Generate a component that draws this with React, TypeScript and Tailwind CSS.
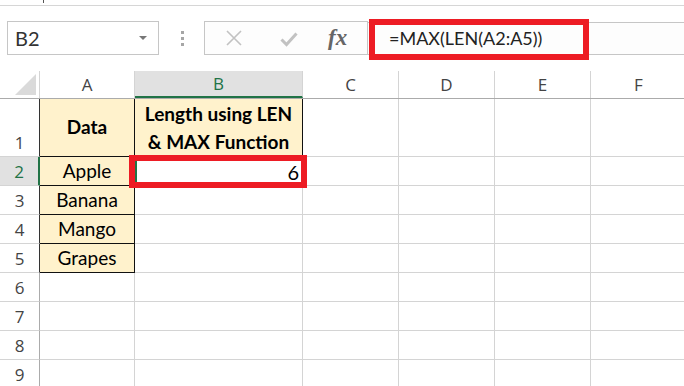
import React from "react";

const COLS = [
  { key: "A", w: "w-[95px]" },
  { key: "B", w: "w-[168px]" },
  { key: "C", w: "w-[96px]" },
  { key: "D", w: "w-[96px]" },
  { key: "E", w: "w-[96px]" },
  { key: "F", w: "w-[96px]" },
];

const DATA = ["Apple", "Banana", "Mango", "Grapes"];

const cellFont = { fontFamily: "Lato, 'Open Sans', sans-serif" };
const uiFont = { fontFamily: "'Open Sans', 'Noto Sans', sans-serif" };

function Toolbar() {
  return (
    <div className="relative h-[71px] shrink-0">
      {/* strip left over from the ribbon */}
      <div className="relative h-[6px] border-b border-[#d6d6d6]">
        <div className="absolute left-[43px] top-0 h-[3px] w-px bg-[#555]" />
      </div>
      <div className="flex items-start pt-[15px]">
        {/* name box */}
        <div
          className="ml-[7px] flex h-[34px] w-[152px] items-center justify-between border border-[#c6c6c6] bg-white pl-[7px] pr-[11px] text-[20px] text-[#333]"
          style={cellFont}
        >
          <span>B2</span>
          <span className="h-0 w-0 border-x-[4px] border-t-[4px] border-x-transparent border-t-[#777]" />
        </div>
        {/* grip dots */}
        <div className="flex h-[34px] w-[45px] flex-col items-center justify-center gap-[3px] pl-[1px]">
          <span className="h-[3px] w-[3px] bg-[#a6a6a6]" />
          <span className="h-[3px] w-[3px] bg-[#a6a6a6]" />
          <span className="h-[3px] w-[3px] bg-[#a6a6a6]" />
        </div>
        {/* cancel / enter / fx */}
        <div className="flex h-[34px] w-[164px] items-center border border-[#c6c6c6] bg-[#fdfdfd]">
          <svg className="ml-[21px]" width="16" height="16" viewBox="0 0 16 16">
            <path d="M1 1 L15 15 M15 1 L1 15" stroke="#c2c2c2" strokeWidth="1.6" fill="none" />
          </svg>
          <svg className="ml-[38px] mt-[2px]" width="18" height="16" viewBox="0 0 18 16">
            <path d="M1.5 8.5 L6.5 13.5 L16.5 2.5" stroke="#c2c2c2" strokeWidth="3" fill="none" />
          </svg>
          <span
            className="ml-[30px] text-[23px] font-semibold italic text-[#666]"
            style={{ fontFamily: "'Liberation Serif', serif" }}
          >
            fx
          </span>
        </div>
        {/* formula input */}
        <div
          className="mt-[1px] flex h-[33px] flex-1 items-center border-y border-[#c6c6c6] bg-[#fdfdfd] pl-[21px] text-[18px] text-[#222]"
          style={cellFont}
        >
          =MAX(LEN(A2:A5))
        </div>
      </div>
      {/* annotation box */}
      <div className="pointer-events-none absolute left-[369px] top-[19px] h-[41px] w-[220px] border-[6px] border-[#ed1c24]" />
    </div>
  );
}

function HeaderRow() {
  return (
    <div className="flex h-[28px] shrink-0 border-b border-[#ababab]" style={uiFont}>
      <div className="relative w-[40px] shrink-0 border-r border-[#d4d4d4]">
        <svg className="absolute left-[15px] top-[3px]" width="21" height="21" viewBox="0 0 21 21">
          <path d="M0 21 L21 0 L21 21 Z" fill="#dadada" />
        </svg>
      </div>
      {COLS.map((c) => {
        const sel = c.key === "B";
        return (
          <div
            key={c.key}
            className={`${c.w} flex shrink-0 items-center justify-center border-r border-[#d4d4d4] text-[17px] ${
              sel ? "border-b-2 border-b-[#217346] bg-[#e1e1e1] text-[#217346]" : "text-[#444]"
            }`}
          >
            {c.key}
          </div>
        );
      })}
    </div>
  );
}

function Row({ n }: { n: number }) {
  const h = n === 1 ? "h-[58px]" : "h-[29px]";
  const inData = n <= 5;
  const sel = n === 2;
  return (
    <div className={`flex ${h} shrink-0`}>
      <div
        className={`flex w-[40px] shrink-0 items-end justify-center border-b pb-[1px] text-[17px] ${
          sel
            ? "border-b-[#d4d4d4] border-r-2 border-r-[#217346] bg-[#e1e1e1] text-[#217346]"
            : `border-b-[#d4d4d4] border-r ${inData ? "border-r-[#333]" : "border-r-[#ababab]"} text-[#444]`
        }`}
        style={uiFont}
      >
        {n}
      </div>
      {COLS.map((c) => {
        if (c.key === "A" && inData) {
          return (
            <div
              key={c.key}
              className={`${c.w} flex shrink-0 items-center justify-center border-b border-r border-[#111] bg-[#fff2cc] text-[19px] text-black ${
                n === 1 ? "font-bold" : ""
              }`}
              style={cellFont}
            >
              {n === 1 ? "Data" : DATA[n - 2]}
            </div>
          );
        }
        if (c.key === "B" && n === 1) {
          return (
            <div
              key={c.key}
              className={`${c.w} flex shrink-0 items-center justify-center border-b border-r border-[#111] bg-[#fff2cc] text-center text-[19px] font-bold leading-[28px] text-black`}
              style={cellFont}
            >
              Length using LEN
              <br />& MAX Function
            </div>
          );
        }
        if (c.key === "B" && n === 2) {
          return (
            <div
              key={c.key}
              className={`${c.w} relative flex shrink-0 items-center justify-end border-l-2 border-[#217346] pr-[4px] text-[20px] text-black`}
              style={cellFont}
            >
              6
              <span className="absolute -bottom-[2px] -right-[2px] h-[5px] w-[5px] bg-[#217346]" />
              <span className="pointer-events-none absolute -left-[8px] -right-[4px] -top-[2px] -bottom-[2px] border-[6px] border-[#ed1c24]" />
            </div>
          );
        }
        return (
          <div key={c.key} className={`${c.w} shrink-0 border-b border-r border-[#d4d4d4]`} />
        );
      })}
    </div>
  );
}

export default function App() {
  return (
    <div className="flex h-[386px] w-[684px] flex-col overflow-hidden bg-white">
      <Toolbar />
      <HeaderRow />
      {[1, 2, 3, 4, 5, 6, 7, 8, 9].map((n) => (
        <Row key={n} n={n} />
      ))}
    </div>
  );
}
